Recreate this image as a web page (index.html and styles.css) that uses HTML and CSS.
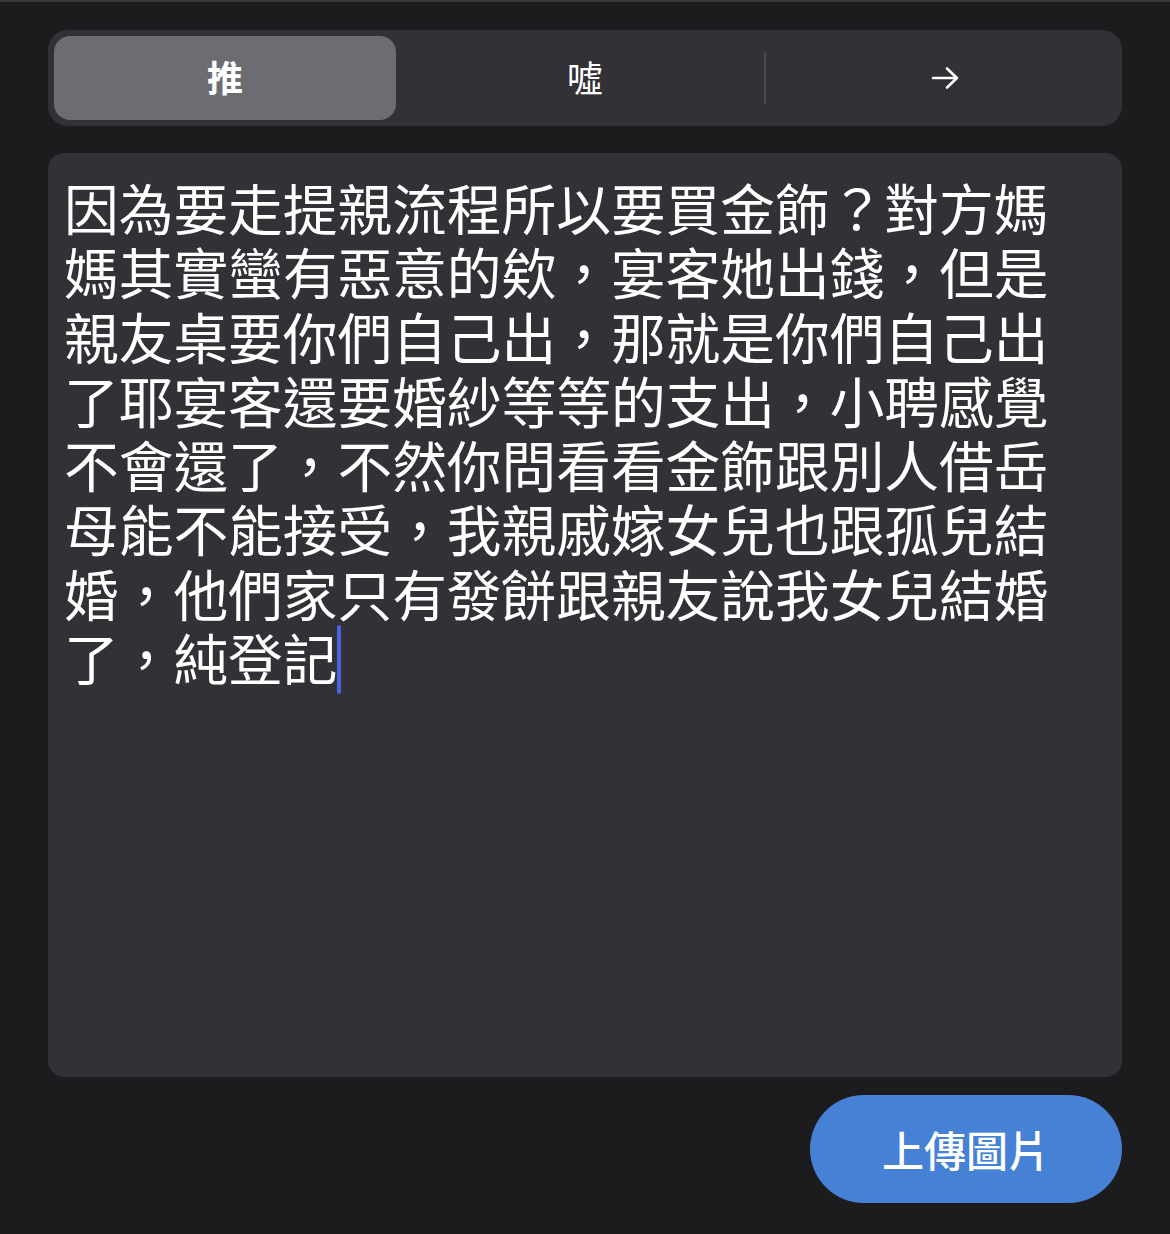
FILE: index.html
```html
<!DOCTYPE html>
<html lang="zh-Hant">
<head>
<meta charset="utf-8">
<title>Post</title>
<link rel="stylesheet" href="styles.css">
</head>
<body>
<div class="page">
  <div class="segmented">
    <div class="seg seg-active">推</div>
    <div class="gap"></div>
    <div class="seg">噓</div>
    <div class="gap"><span class="divider"></span></div>
    <div class="seg">
      <svg class="arrow" width="28" height="24" viewBox="0 0 28 24" fill="none" stroke="#ffffff" stroke-width="2.6" stroke-linecap="round" stroke-linejoin="round"><path d="M2 12 H26 M16 2.5 L26 12 L16 21.5"/></svg>
    </div>
  </div>
  <div class="editor">因為要走提親流程所以要買金飾？對方媽媽其實蠻有惡意的欸，宴客她出錢，但是親友桌要你們自己出，那就是你們自己出了耶宴客還要婚紗等等的支出，小聘感覺不會還了，不然你問看看金飾跟別人借岳母能不能接受，我親戚嫁女兒也跟孤兒結婚，他們家只有發餅跟親友說我女兒結婚了，純登記<span class="caret"></span></div>
  <div class="actions">
    <button class="upload">上傳圖片</button>
  </div>
</div>
</body>
</html>
```
FILE: styles.css
```css
html, body {
  margin: 0;
  padding: 0;
  background: #1c1c1e;
}
body {
  border-top: 2px solid #3a3a3d;
  font-family: "Noto Sans CJK TC", "Noto Sans", sans-serif;
  color: #ffffff;
}
.page {
  padding: 28px 48px 0 48px;
}
.segmented {
  display: grid;
  grid-template-columns: 1fr 18px 1fr 18px 1fr;
  height: 96px;
  padding: 6px;
  box-sizing: border-box;
  background: #313136;
  border-radius: 20px;
}
.seg {
  display: flex;
  align-items: center;
  justify-content: center;
  padding-bottom: 4px;
  font-size: 36px;
  color: #ffffff;
  border-radius: 16px;
}
.seg-active {
  background: #6d6c72;
  font-weight: 700;
}
.gap {
  display: flex;
  align-items: center;
  justify-content: center;
}
.divider {
  display: block;
  width: 2px;
  height: 52px;
  background: #4b4b51;
  border-radius: 1px;
}
.arrow {
  display: block;
  margin-top: 4px;
}
.editor {
  margin-top: 27px;
  height: 924px;
  box-sizing: border-box;
  padding: 22px 40px 0 16px;
  background: #313136;
  border-radius: 16px;
  font-size: 54.7px;
  line-height: 64.3px;
  color: #ffffff;
  word-break: break-all;
}
.caret {
  display: inline-block;
  width: 4px;
  height: 69px;
  margin-left: 0;
  background: #4a63e2;
  border-radius: 2px;
  vertical-align: -14px;
}
.actions {
  display: flex;
  justify-content: flex-end;
  margin-top: 18px;
}
.upload {
  width: 312px;
  height: 108px;
  border: none;
  border-radius: 54px;
  background: #4681d5;
  color: #ffffff;
  font-family: "Noto Sans CJK TC", "Noto Sans", sans-serif;
  font-size: 42px;
  font-weight: 500;
  padding: 0 0 2px 0;
}
```
